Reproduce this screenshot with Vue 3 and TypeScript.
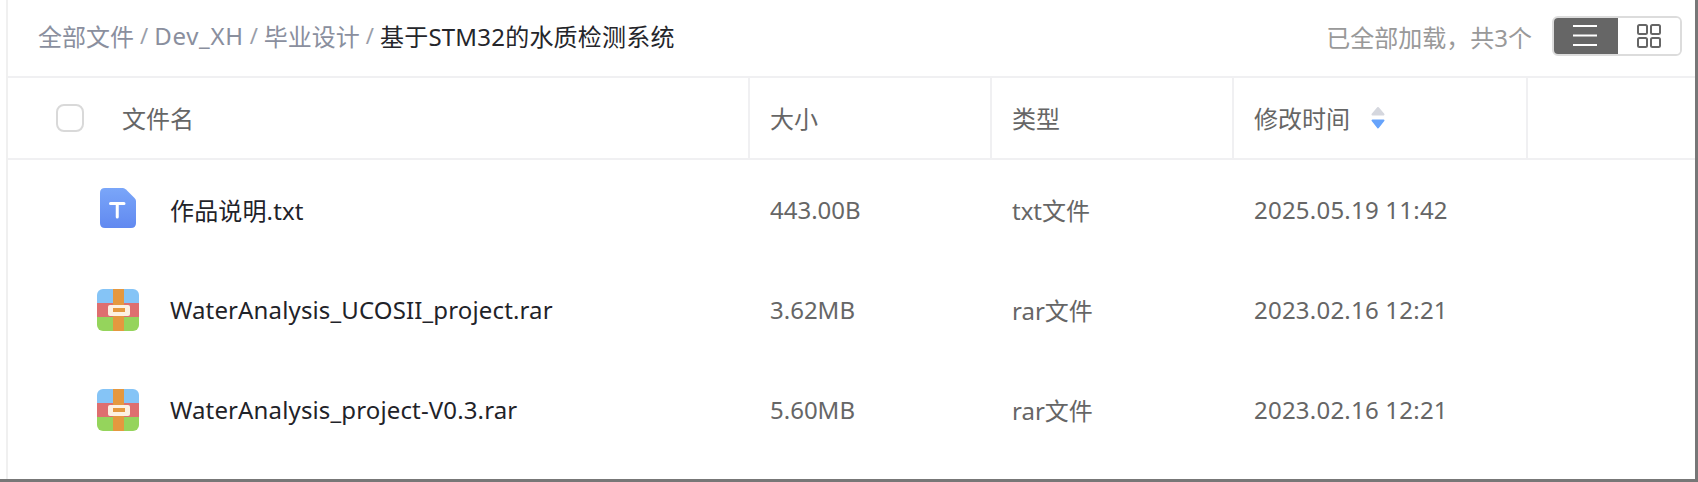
<script setup lang="ts">
interface FileRow {
  name: string
  size: string
  type: string
  time: string
  kind: 'txt' | 'rar'
}

const files: FileRow[] = [
  { name: '作品说明.txt', size: '443.00B', type: 'txt文件', time: '2025.05.19 11:42', kind: 'txt' },
  { name: 'WaterAnalysis_UCOSII_project.rar', size: '3.62MB', type: 'rar文件', time: '2023.02.16 12:21', kind: 'rar' },
  { name: 'WaterAnalysis_project-V0.3.rar', size: '5.60MB', type: 'rar文件', time: '2023.02.16 12:21', kind: 'rar' },
]
</script>

<template>
  <div class="page">
    <section class="panel">
      <header class="topbar">
        <nav class="crumbs">
          <span>全部文件</span><i>/</i><span class="crumbs__latin">Dev_XH</span><i>/</i><span>毕业设计</span><i>/</i>
          <span class="crumbs__current">基于STM32的水质检测系统</span>
        </nav>
        <div class="topbar__right">
          <span class="count">已全部加载，共3个</span>
          <div class="toggle">
            <button type="button" class="toggle__btn toggle__btn--active">
              <svg width="24" height="22" viewBox="0 0 24 22" fill="#fff">
                <rect x="0" y="0" width="24" height="2" />
                <rect x="0" y="9.5" width="24" height="2" />
                <rect x="0" y="19" width="24" height="2" />
              </svg>
            </button>
            <button type="button" class="toggle__btn">
              <svg width="24" height="24" viewBox="0 0 24 24" fill="none" stroke="#666" stroke-width="2">
                <rect x="1" y="1" width="9" height="9" rx="1.5" />
                <rect x="14" y="1" width="9" height="9" rx="1.5" />
                <rect x="1" y="14" width="9" height="9" rx="1.5" />
                <rect x="14" y="14" width="9" height="9" rx="1.5" />
              </svg>
            </button>
          </div>
        </div>
      </header>

      <div class="thead">
        <div class="th th--name">
          <span class="checkbox"></span>
          <span class="th__label">文件名</span>
        </div>
        <div class="th"><span class="th__label">大小</span></div>
        <div class="th"><span class="th__label">类型</span></div>
        <div class="th">
          <span class="th__label">修改时间</span>
          <svg class="sort" width="14" height="24" viewBox="0 0 14 24">
            <path d="M7 2 L12.5 8.5 H1.5 Z" fill="#d5d7de" stroke="#d5d7de" stroke-width="2" stroke-linejoin="round" />
            <path d="M1.5 14.5 H12.5 L7 21.5 Z" fill="#66a3fb" stroke="#66a3fb" stroke-width="2" stroke-linejoin="round" />
          </svg>
        </div>
        <div class="th th--last"></div>
      </div>

      <div v-for="file in files" :key="file.name" class="row">
        <div class="cell cell--name">
          <span class="icon" :class="{ 'icon--txt': file.kind === 'txt' }">
            <svg v-if="file.kind === 'txt'" width="36" height="40" viewBox="0 0 36 40">
              <defs>
                <linearGradient id="txtFill" x1="0" y1="0" x2="0" y2="1">
                  <stop offset="0" stop-color="#7aa6f9" />
                  <stop offset="1" stop-color="#6189f0" />
                </linearGradient>
              </defs>
              <path d="M5 0 H23 Q24.5 0 26 1.5 L34.5 10 Q36 11.5 36 13 V35 Q36 40 31 40 H5 Q0 40 0 35 V5 Q0 0 5 0 Z" fill="url(#txtFill)" />
              <path d="M10.5 15.5 H24 M17.25 15.5 V29" stroke="#fff" stroke-width="3" stroke-linecap="round" fill="none" />
            </svg>
            <svg v-else width="42" height="42" viewBox="0 0 42 42">
              <clipPath id="rarClip">
                <rect width="42" height="42" rx="6" />
              </clipPath>
              <g clip-path="url(#rarClip)">
                <rect width="42" height="14" fill="#85c4f6" />
                <rect y="14" width="42" height="14" fill="#de6f6f" />
                <rect y="28" width="42" height="14" fill="#95d45c" />
                <rect x="16" width="11" height="42" fill="#e5983f" />
                <rect x="11" y="16" width="22" height="11" rx="2" fill="#fdf1e2" />
                <rect x="16" y="19" width="12" height="4" fill="#e5983f" />
              </g>
            </svg>
          </span>
          <span class="filename">{{ file.name }}</span>
        </div>
        <div class="cell"><span class="cell__text">{{ file.size }}</span></div>
        <div class="cell"><span class="cell__text">{{ file.type }}</span></div>
        <div class="cell"><span class="cell__text cell__text--time">{{ file.time }}</span></div>
        <div class="cell"></div>
      </div>
    </section>
  </div>
</template>

<style>
body {
  margin: 0;
  background: #fff;
}
</style>

<style scoped>
.page {
  width: 1698px;
  height: 482px;
  box-sizing: border-box;
  display: flex;
  padding-left: 6px;
  border-right: 3px solid #777;
  border-bottom: 3px solid #777;
  background: #fff;
  font-family: "Noto Sans", "Noto Sans CJK SC", sans-serif;
  font-size: 24px;
  overflow: hidden;
}

.panel {
  flex: 1;
  border-left: 2px solid #f0f0f0;
  display: flex;
  flex-direction: column;
}

.topbar {
  height: 76px;
  flex: none;
  box-sizing: content-box;
  display: flex;
  align-items: center;
  justify-content: space-between;
  padding: 0 13px 0 30px;
  border-bottom: 2px solid #f0f0f2;
}

.crumbs {
  display: flex;
  align-items: center;
  margin-bottom: 6px;
  color: #8a8f9e;
}

.crumbs i {
  font-style: normal;
  font-size: 22px;
  margin: 0 6px;
  color: #9a9ea9;
}

.crumbs__latin {
  letter-spacing: 0.7px;
}

.crumbs__current {
  color: #25262b;
  letter-spacing: 0.2px;
}

.topbar__right {
  display: flex;
  align-items: center;
  gap: 20px;
  margin-bottom: 4px;
}

.count {
  color: #999;
}

.toggle {
  display: flex;
  width: 130px;
  height: 40px;
  box-sizing: border-box;
  border-radius: 6px;
  overflow: hidden;
  border: 2px solid #dcdcdc;
}

.toggle__btn {
  appearance: none;
  border: none;
  background: #fff;
  padding: 0;
  flex: 1;
  display: flex;
  align-items: center;
  justify-content: center;
}

.toggle__btn--active {
  flex: none;
  width: 66px;
  margin: -2px 0 -2px -2px;
  background: #666;
}

.thead,
.row {
  display: grid;
  grid-template-columns: 742px 242px 242px 294px 1fr;
}

.thead {
  height: 80px;
  flex: none;
  border-bottom: 2px solid #f0f0f2;
}

.th {
  display: flex;
  align-items: center;
  padding-left: 20px;
  color: #666;
  border-right: 2px solid #f0f0f2;
  box-sizing: border-box;
}

.th--name {
  padding-left: 48px;
  gap: 38px;
}

.th--last {
  border-right: none;
}

.th__label {
  margin-bottom: 2px;
}

.checkbox {
  width: 28px;
  height: 28px;
  box-sizing: border-box;
  border: 2px solid #d9d9d9;
  border-radius: 8px;
}

.sort {
  margin-left: 21px;
}

.row {
  height: 100px;
  flex: none;
}

.cell {
  display: flex;
  align-items: center;
  padding-left: 20px;
  color: #666;
}

.cell--name {
  padding-left: 89px;
}

.cell__text {
  margin-bottom: 1px;
}

.cell__text--time {
  letter-spacing: 0.22px;
}

.icon {
  width: 42px;
  height: 42px;
  display: flex;
  align-items: center;
  justify-content: center;
  margin-right: 31px;
}

.icon--txt {
  margin-bottom: 4px;
}

.filename {
  color: #1f2329;
  letter-spacing: 0.14px;
  margin-bottom: 1px;
}
</style>
